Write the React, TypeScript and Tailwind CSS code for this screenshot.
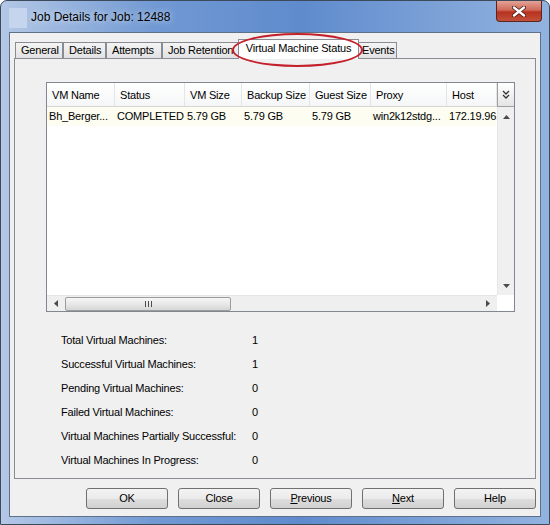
import React from 'react';

const tabs = [
  { label: 'General', w: 'w-[48px]' },
  { label: 'Details', w: 'w-[43px]' },
  { label: 'Attempts', w: 'w-[56px]' },
  { label: 'Job Retention', w: 'w-[78px]' },
];

const columns = [
  { name: 'VM Name', w: 'w-[68px]', value: 'Bh_Berger...' },
  { name: 'Status', w: 'w-[70px]', value: 'COMPLETED' },
  { name: 'VM Size', w: 'w-[57px]', value: '5.79 GB' },
  { name: 'Backup Size', w: 'w-[68px]', value: '5.79 GB' },
  { name: 'Guest Size', w: 'w-[61px]', value: '5.79 GB' },
  { name: 'Proxy', w: 'w-[76px]', value: 'win2k12stdg...' },
  { name: 'Host', w: 'w-[50px]', value: '172.19.96.214' },
];

const stats = [
  { label: 'Total Virtual Machines:', value: '1' },
  { label: 'Successful Virtual Machines:', value: '1' },
  { label: 'Pending Virtual Machines:', value: '0' },
  { label: 'Failed Virtual Machines:', value: '0' },
  { label: 'Virtual Machines Partially Successful:', value: '0' },
  { label: 'Virtual Machines In Progress:', value: '0' },
];

const Arrow: React.FC<{ dir: 'up' | 'down' | 'left' | 'right' }> = ({ dir }) => {
  const pts = {
    up: '0,4 7,4 3.5,0',
    down: '0,0 7,0 3.5,4',
    left: '4,0 4,7 0,3.5',
    right: '0,0 0,7 4,3.5',
  }[dir];
  const vertical = dir === 'up' || dir === 'down';
  return (
    <svg width={vertical ? 7 : 4} height={vertical ? 4 : 7} viewBox={vertical ? '0 0 7 4' : '0 0 4 7'}>
      <polygon points={pts} fill="#4a4a4a" />
    </svg>
  );
};

const DialogButton: React.FC<{ children: React.ReactNode }> = ({ children }) => (
  <button className="w-[82px] h-[21px] rounded-[3px] border border-[#707070] bg-[linear-gradient(to_bottom,#f3f3f3_0%,#ebebeb_50%,#dedede_51%,#d1d1d1_100%)] text-[11px] text-black flex items-center justify-center">
    {children}
  </button>
);

const App: React.FC = () => {
  return (
    <div className="relative w-[550px] h-[525px] flex flex-col overflow-hidden rounded-t-[7px] border border-[#3c4a5c] bg-[linear-gradient(to_right,#b4c8e6,#7199d3_28%,#5f8bcd_55%,#93b3df)] font-['Liberation_Sans',Arial,sans-serif] text-[11px] tracking-[-0.2px] text-black">
      {/* title bar */}
      <div className="h-[31px] shrink-0 flex items-start">
        <div className="mt-[7px] ml-[8px] w-[18px] h-[20px] bg-[#c6d5ee]" />
        <div className="mt-[9px] ml-[4px] text-[12px] leading-[14px] tracking-normal text-black [text-shadow:0_0_6px_rgba(255,255,255,0.8)]">
          Job Details for Job: 12488
        </div>
        <div className="ml-auto mr-[7px] w-[46px] h-[21px] rounded-b-[4px] border border-t-0 border-[#5a251d] bg-[linear-gradient(to_bottom,#e3a397_0%,#cf6a5a_45%,#b7321f_55%,#c2503b_100%)] flex items-center justify-center">
          <svg width="14" height="11" viewBox="0 0 14 11">
            <path d="M2 1.5 L12 9.5 M12 1.5 L2 9.5" stroke="#4a1810" strokeWidth="4" strokeLinecap="round" />
            <path d="M2 1.5 L12 9.5 M12 1.5 L2 9.5" stroke="#ffffff" strokeWidth="2.4" strokeLinecap="round" />
          </svg>
        </div>
      </div>

      {/* dialog body */}
      <div className="flex-1 flex flex-col px-[8px] pb-[7px]">
        <div className="flex-1 flex flex-col border border-[#5f718a] bg-[#f0f0f0] px-[4px]">
          {/* tab strip */}
          <div className="relative z-10 flex items-end pt-[6px] pl-[1px]">
            {tabs.map((t) => (
              <div
                key={t.label}
                className={`${t.w} h-[16px] shrink-0 overflow-hidden whitespace-nowrap border border-b-0 border-[#898c95] bg-[linear-gradient(to_bottom,#f4f4f4,#e2e2e2)] pl-[5px] flex items-center`}
              >
                {t.label}
              </div>
            ))}
            <div className="relative z-10 -ml-[2px] -mb-[1px] w-[121px] h-[20px] shrink-0 border border-b-0 border-[#898c95] bg-white flex items-center justify-center pb-[2px] whitespace-nowrap">
              Virtual Machine Status
            </div>
            <div className="w-[38px] h-[16px] shrink-0 border border-b-0 border-l-0 border-[#898c95] bg-[linear-gradient(to_bottom,#f4f4f4,#e2e2e2)] pl-[3px] flex items-center">
              Events
            </div>
          </div>

          {/* tab panel */}
          <div className="flex-1 flex flex-col border border-[#898c95] bg-[#f0f0f0]">
            {/* table */}
            <div className="ml-[31px] mt-[23px] w-[469px] h-[230px] border border-[#828790] bg-white flex flex-col">
              <div className="flex flex-1 min-h-0">
                <div className="w-[450px] flex flex-col">
                  <div className="h-[24px] flex border-b border-[#d5d5d5] bg-[linear-gradient(to_bottom,#ffffff,#f5f6f7)]">
                    {columns.map((c) => (
                      <div
                        key={c.name}
                        className={`${c.w} h-full shrink-0 flex items-center pl-[5px] pt-[2px] border-r border-[#e3e5e8] whitespace-nowrap`}
                      >
                        {c.name}
                      </div>
                    ))}
                  </div>
                  <div className="h-[19px] flex bg-[#fdfdf1]">
                    {columns.map((c) => (
                      <div
                        key={c.name}
                        className={`${c.w} h-full shrink-0 flex items-center pl-[2px] overflow-hidden whitespace-nowrap`}
                      >
                        {c.value}
                      </div>
                    ))}
                  </div>
                </div>
                <div className="w-[17px] flex flex-col">
                  <div className="h-[24px] border-l border-b border-[#a0a0a0] bg-[linear-gradient(to_bottom,#ffffff,#e4e4e4)] flex items-center justify-center">
                    <svg width="8" height="9" viewBox="0 0 8 9">
                      <path d="M1 1 L4 4 L7 1 M1 5 L4 8 L7 5" stroke="#333" strokeWidth="1.3" fill="none" />
                    </svg>
                  </div>
                  <div className="flex-1 bg-[#f0f0f0] border-l border-[#e6e6e6] flex flex-col items-center justify-between pt-[8px] pb-[7px]">
                    <Arrow dir="up" />
                    <Arrow dir="down" />
                  </div>
                </div>
              </div>
              <div className="h-[16px] flex">
                <div className="w-[450px] bg-[#efefef] border-t border-[#e6e6e6] flex items-center">
                  <div className="w-[18px] flex justify-center">
                    <Arrow dir="left" />
                  </div>
                  <div className="w-[166px] h-[14px] rounded-[2px] border border-[#9c9c9c] bg-[linear-gradient(to_bottom,#f6f6f6,#e8e8e8_50%,#d6d6d6)] flex items-center justify-center gap-[2px]">
                    <div className="w-px h-[6px] bg-[#4d4d4d]" />
                    <div className="w-px h-[6px] bg-[#4d4d4d]" />
                    <div className="w-px h-[6px] bg-[#4d4d4d]" />
                  </div>
                  <div className="flex-1 flex justify-end pr-[7px]">
                    <Arrow dir="right" />
                  </div>
                </div>
                <div className="w-[17px] bg-white" />
              </div>
            </div>

            {/* summary */}
            <div className="mt-[16px] ml-[46px] flex flex-col">
              {stats.map((s) => (
                <div key={s.label} className="h-[24px] flex items-center">
                  <div className="w-[191px] whitespace-nowrap">{s.label}</div>
                  <div>{s.value}</div>
                </div>
              ))}
            </div>
          </div>

          {/* buttons */}
          <div className="mt-[9px] mb-[7px] flex justify-end gap-[10px]">
            <DialogButton>OK</DialogButton>
            <DialogButton>Close</DialogButton>
            <DialogButton>
              <span className="underline underline-offset-1">P</span>revious
            </DialogButton>
            <DialogButton>
              <span className="underline underline-offset-1">N</span>ext
            </DialogButton>
            <DialogButton>Help</DialogButton>
          </div>
        </div>
      </div>

      {/* red highlight ellipse */}
      <div className="absolute left-[231px] top-[32px] w-[131px] h-[34px] rounded-[50%] border-2 border-[#c4202c] z-20 pointer-events-none" />
    </div>
  );
};

export default App;
